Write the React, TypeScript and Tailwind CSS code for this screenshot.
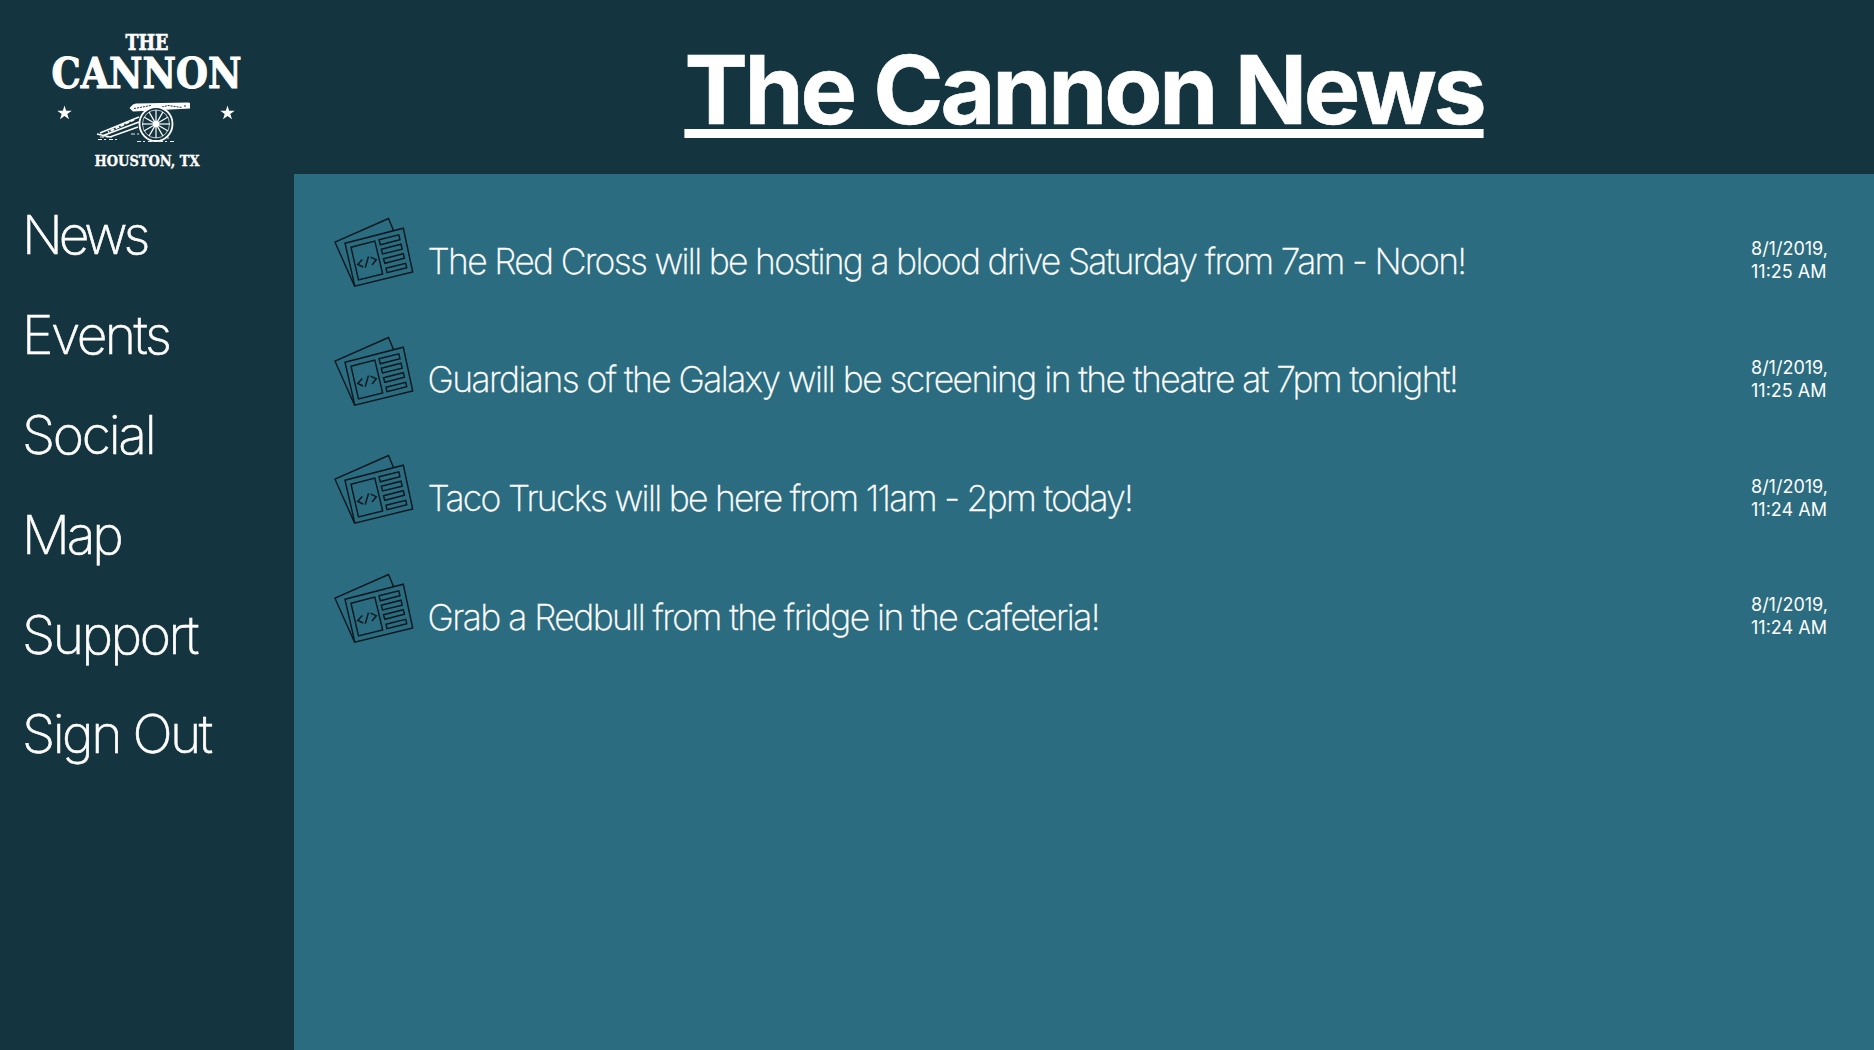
const navItems = [
  { label: "News", tracking: "tracking-[-0.077em]" },
  { label: "Events", tracking: "tracking-[-0.047em]" },
  { label: "Social", tracking: "tracking-[-0.043em]" },
  { label: "Map", tracking: "tracking-[-0.058em]" },
  { label: "Support", tracking: "tracking-[-0.046em]" },
  { label: "Sign Out", tracking: "tracking-[-0.047em]" },
];

const stories = [
  { text: "The Red Cross will be hosting a blood drive Saturday from 7am - Noon!", time: "11:25 AM", tracking: "tracking-[-0.0476em]" },
  { text: "Guardians of the Galaxy will be screening in the theatre at 7pm tonight!", time: "11:25 AM", tracking: "tracking-[-0.0439em]" },
  { text: "Taco Trucks will be here from 11am - 2pm today!", time: "11:24 AM", tracking: "tracking-[-0.048em]" },
  { text: "Grab a Redbull from the fridge in the cafeteria!", time: "11:24 AM", tracking: "tracking-[-0.044em]" },
];

const spokes = [0, 30, 60, 90, 120, 150];

function Star({ x }: { x: number }) {
  return (
    <path
      transform={`translate(${x} 93)`}
      d="M0-7.5 1.7-2.3H7.2L2.8.9 4.5 6.2 0 3-4.5 6.2-2.8.9-7.2-2.3H-1.7Z"
      fill="#fff"
    />
  );
}

function Logo() {
  return (
    <svg className="block h-[160px] w-[230px]" viewBox="0 0 230 160" fill="none">
      <g fill="#fff" stroke="#fff" strokeWidth="0.6" fontFamily="'DejaVu Serif Condensed','DejaVu Serif',serif" fontWeight="700">
        <text x="95.500" y="29.800" fontSize="21.500" textLength="43" lengthAdjust="spacingAndGlyphs">THE</text>
        <text x="21.500" y="67.800" fontSize="43" strokeWidth="1" textLength="190" lengthAdjust="spacingAndGlyphs">CANNON</text>
        <text x="64.500" y="146" fontSize="15.500" strokeWidth="0.300" textLength="105" lengthAdjust="spacingAndGlyphs">HOUSTON, TX</text>
      </g>
      <Star x={34.5} />
      <Star x={197.5} />
      <path d="M99.500 88 103 84.500 106 83.500 158 82.5 160 83V88.500L112 91 103 91.500Z" fill="#fff" />
      <path d="M104 88.500 121 85.5M126 88.500 138 85.500 152 87.5M155 85V88" stroke="#14343f" strokeWidth="1" strokeDasharray="2 1" />
      <path d="M109 97 70 113M109 102 72 116M67 114 80 117 108 107" stroke="#fff" strokeWidth="1.5" />
      <path d="M104 99.5 78 112" stroke="#fff" strokeWidth="2" strokeDasharray="4 1.5" />
      <path d="M68 119.5H90M101 114H110M107 121.500H146M120 118H140M70 117H82" stroke="#fff" strokeWidth="0.9" strokeDasharray="4 2 2 3" />
      <ellipse cx="126" cy="104" rx="16.500" ry="17" fill="#14343f" stroke="#fff" strokeWidth="1.8" />
      <ellipse cx="126" cy="104" rx="13.500" ry="14" stroke="#fff" strokeWidth="0.7" />
      {spokes.map((a) => (
        <path key={a} d="M126 90V118" transform={`rotate(${a} 126 104)`} stroke="#fff" strokeWidth="1.200" />
      ))}
      <circle cx="126" cy="104" r="3.2" fill="#fff" />
    </svg>
  );
}

function Newspaper() {
  return (
    <svg className="h-[90px] w-[110px] shrink-0" viewBox="0 0 110 90" fill="none" stroke="#06181e" strokeWidth="1.4">
      <path d="M73.500 25.500 68.500 13.500 15 37.200 34.500 81" />
      <path d="M25 38.200 83.300 23.200 92.700 67 34.800 81.200Z" />
      <path d="M31 42.200 54.800 36 62.700 69 38.500 75Z" />
      <path d="M59 34.800 78.800 29.800 80 34.800 60.300 39.800Z" />
      <path d="M61.300 44.200 81 39.200 82.200 44.200 62.500 49Z" />
      <path d="M63.500 53.700 83.300 48.700 84.500 53.300 64.800 58.300Z" />
      <path d="M66 63.200 85.700 58.300 86.800 62.800 67 67.700Z" />
      <path d="M42.300 54.500 37.700 59.500 43.200 62M48.500 51.500 45.200 62.700M50.500 52.200 56.300 54.700 52 60" />
    </svg>
  );
}

export default function App() {
  return (
    <div className="flex h-[1050px] w-full overflow-hidden bg-[#14343f] font-['Inter',sans-serif] text-white">
      <aside className="w-[294px] shrink-0 pt-5">
        <div className="pl-[30px]">
          <Logo />
        </div>
        <nav className="flex flex-col pt-[5px] pl-[22px]">
          {navItems.map((item) => (
            <a key={item.label} className={`h-[99.9px] text-[53.3px] leading-[100px] font-extralight whitespace-nowrap [-webkit-text-stroke:0.6px_white] ${item.tracking}`}>
              {item.label}
            </a>
          ))}
        </nav>
      </aside>
      <div className="flex min-w-0 flex-1 flex-col">
        <header className="flex h-[174px] shrink-0 items-center justify-center pt-[5px]">
          <h1 className="text-[95px] leading-[116px] font-bold tracking-[-0.0335em] underline decoration-[9px] [text-decoration-skip-ink:none] [-webkit-text-stroke:0.6px_white]">The Cannon News</h1>
        </header>
        <main className="flex-1 bg-[#2b6c80] pt-[31px] pl-[26px]">
          {stories.map((s) => (
            <article key={s.text} className="flex h-[118.7px] items-start">
              <Newspaper />
              <p className={`-ml-[2.5px] flex-1 pt-[34.5px] text-[35.5px] leading-[44px] font-extralight whitespace-nowrap [-webkit-text-stroke:0.35px_white] ${s.tracking}`}>{s.text}</p>
              <time className="w-[123px] pt-[32.3px] text-[18px] leading-[23px]">
                8/1/2019,
                <br />
                {s.time}
              </time>
            </article>
          ))}
        </main>
      </div>
    </div>
  );
}
